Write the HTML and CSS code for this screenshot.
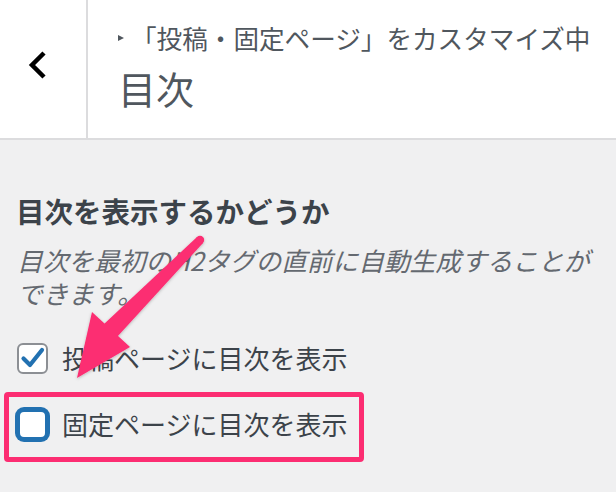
FILE: index.html
```html
<!DOCTYPE html>
<html lang="ja">
<head>
<meta charset="utf-8">
<link rel="stylesheet" href="styles.css">
</head>
<body>
<div class="header">
  <div class="back">
    <svg class="chevron" width="20" height="28" viewBox="0 0 20 28"><polyline points="16,2 4,14 16,26" fill="none" stroke="#000" stroke-width="4.5" stroke-linejoin="miter"/></svg>
  </div>
  <div class="titles">
    <div class="subtitle"><span class="tri"></span>「投稿・固定ページ」をカスタマイズ中</div>
    <div class="title">目次</div>
  </div>
</div>
<div class="content">
  <div class="heading">目次を表示するかどうか</div>
  <div class="desc">目次を最初のH2タグの直前に自動生成することができます。</div>
  <div class="row row1">
    <span class="box checked"><svg width="26" height="26" viewBox="0 0 26 26"><polyline points="3.5,13.5 10,20 22,5" fill="none" stroke="#2271b1" stroke-width="4.2" stroke-linecap="round" stroke-linejoin="round"/></svg></span>
    <span class="label">投稿ページに目次を表示</span>
  </div>
  <div class="row row2">
    <span class="box focus"></span>
    <span class="label">固定ページに目次を表示</span>
  </div>
</div>
<div class="highlight"></div>
<svg class="arrow" width="616" height="492" viewBox="0 0 616 492">
  <defs>
    <filter id="sh" x="-20%" y="-20%" width="140%" height="140%"><feDropShadow dx="0" dy="1" stdDeviation="1.5" flood-color="#000" flood-opacity="0.25"/></filter>
  </defs>
  <g fill="#fc2d72" filter="url(#sh)">
    <polygon points="203,243 197,237 103,325 117,337"/>
    <circle cx="200" cy="240" r="4.2"/>
    <polygon points="92,312 130,347 77,378"/>
  </g>
</svg>
</body>
</html>
```
FILE: styles.css
```css
html, body {
  margin: 0;
  padding: 0;
}
body {
  background: #f0f0f1;
  font-family: "Noto Sans CJK JP", "Noto Sans", sans-serif;
  width: 616px;
  height: 492px;
  overflow: hidden;
  position: relative;
}
.header {
  display: flex;
  height: 138px;
  background: #fff;
  border-bottom: 2px solid #dcdcde;
}
.back {
  width: 86px;
  border-right: 2px solid #dcdcde;
  box-sizing: content-box;
  display: flex;
  align-items: flex-start;
}
.chevron {
  display: block;
  margin: 51px 0 0 28px;
}
.titles {
  padding: 20px 0 0 30px;
  color: #50575e;
}
.subtitle {
  font-size: 25.6px;
  line-height: 36px;
  white-space: nowrap;
  display: flex;
  align-items: center;
}
.tri {
  display: inline-block;
  width: 0;
  height: 0;
  border-left: 6px solid #50575e;
  border-top: 3.5px solid transparent;
  border-bottom: 3.5px solid transparent;
  margin-right: 7px;
}
.title {
  font-size: 38px;
  line-height: 50px;
  margin-top: 7px;
}
.content {
  padding: 53px 18px 0 18px;
}
.heading {
  font-size: 28.5px;
  line-height: 36px;
  font-weight: bold;
  color: #3c434a;
  margin-left: -2px;
}
.desc {
  margin-top: 14px;
  font-size: 25.7px;
  line-height: 33px;
  font-style: italic;
  color: #646970;
  margin-left: -1px;
}
.row {
  display: flex;
  align-items: center;
  height: 36px;
}
.row1 {
  margin-top: 31px;
}
.row2 {
  margin-top: 30px;
}
.box {
  width: 31px;
  height: 31px;
  box-sizing: border-box;
  background: #fff;
  border: 2px solid #8c8f94;
  border-radius: 6px;
  display: flex;
  align-items: center;
  justify-content: center;
  margin-left: -1px;
}
.box.focus {
  border: 3px solid #2271b1;
  box-shadow: 0 0 0 2px #2271b1;
  border-radius: 7px;
}
.label {
  margin-left: 14px;
  font-size: 26px;
  line-height: 36px;
  color: #3c434a;
}
.highlight {
  position: absolute;
  left: 4px;
  top: 392px;
  width: 360px;
  height: 70px;
  box-sizing: border-box;
  border: 5px solid #fc2d72;
  border-radius: 4px;
}
.arrow {
  position: absolute;
  left: 0;
  top: 0;
  pointer-events: none;
}
```
